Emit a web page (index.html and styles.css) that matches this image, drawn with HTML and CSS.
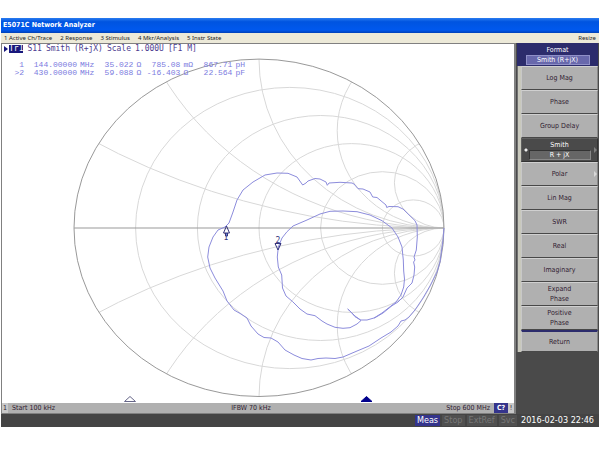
FILE: index.html
```
<!DOCTYPE html>
<html lang="en">
<head>
<meta charset="utf-8">
<meta content="width=device-width, initial-scale=1.0" name="viewport">
<title>E5071C Network Analyzer</title>
<link rel="stylesheet" href="styles.css">
</head>
<body>
<div class="app">
  <h1 class="title">E5071C Network Analyzer</h1>
  <nav class="menu">
    <button>1 Active Ch/Trace</button>
    <button>2 Response</button>
    <button>3 Stimulus</button>
    <button>4 Mkr/Analysis</button>
    <button>5 Instr State</button>
    <button class="resize">Resize</button>
  </nav>
  <main class="main">
    <section class="channel">
      <div class="plot">
        <svg class="smith" viewBox="2 44 512 359">
          <defs>
            <clipPath id="rim"><ellipse cx="259" cy="228" rx="185" ry="169"/></clipPath>
          </defs>
          <!-- constant resistance -->
          <g class="grid" clip-path="url(#rim)">
            <ellipse cx="289.8" cy="228" rx="154.2" ry="140.6"/>
            <ellipse cx="320.7" cy="228" rx="123.3" ry="112.5"/>
            <ellipse cx="351.5" cy="228" rx="92.5" ry="84.4"/>
            <ellipse cx="382.3" cy="228" rx="61.7" ry="56.3"/>
            <ellipse cx="413.2" cy="228" rx="30.8" ry="28.1"/>
            <!-- constant reactance -->
            <ellipse cx="444" cy="-401" rx="690.4" ry="629"/>
            <ellipse cx="444" cy="857" rx="690.4" ry="629"/>
            <ellipse cx="444" cy="-64" rx="320.4" ry="292"/>
            <ellipse cx="444" cy="520" rx="320.4" ry="292"/>
            <ellipse cx="444" cy="59.3" rx="185" ry="168.7"/>
            <ellipse cx="444" cy="396.7" rx="185" ry="168.7"/>
            <ellipse cx="444" cy="130.7" rx="106.8" ry="97.3"/>
            <ellipse cx="444" cy="325.3" rx="106.8" ry="97.3"/>
            <ellipse cx="444" cy="182.8" rx="49.6" ry="45.2"/>
            <ellipse cx="444" cy="273.2" rx="49.6" ry="45.2"/>
          </g>
          <g class="rim">
            <ellipse cx="259" cy="227.8" rx="185" ry="168.7"/>
            <path d="M74 228H444"/>
          </g>
          <path class="trace" d="M444 228L443 240L440 262L437 272L430 286L423 298L415 310L409 317L405 320L401 321L398 326L391 332L381 338L369 346L357 351L343 357L335 358.5L326 358L318 358.5L311 360L302 358.5L294 355L285 350L278 342L271 338L264 337.5L258 334L251 326L247 318L241 314L234 310L227 301L223 291L215 278L210 268L207.7 257L209 247L213 237L218 230L225 227L229 223L233 212L237 200L243 190L253 182L265 175L277 173L288 173.3L297 177L302.7 185L306 183L308 181L315 178.5L320 179L326 182L327.3 185.3L329 183L340 182.3L352 183L354 184L358 188.7L363 189L370 192L372.7 197L377 197.5L382 201.7L386 205L386.7 207.5L389 206.5L398 206.7L403 209L415 220.7L417 225L417.3 237L416.3 250L414 257L415 260L413.6 262L414.7 267L414 275L412 283L407 288L403 297L398 302L392 305.7L383 313L375 317.7L367 320L360.7 320L355 316.7L350 311L347.7 309"/>
          <path class="trace" d="M347.7 309L351 312L355 316L361 320.5L357 324L350 327.7L343 328.3L335 327.3L327 324L322 321L315 315.7L307 314L300 309L292.7 301.7L286 296L282.5 288L281.7 275L278.3 267L277.3 257L278.3 247L282 238L287 231.7L293 226L307 220L320 214L330 211.3L343 211L357 211.7L370 215L382 220.7L392 228L398 237L402 247L403.3 260L403.7 271L404.5 279L403.7 287L401 295L396 302L391 306L382 313L374 318"/>
          <g class="marker">
            <path d="M226.5 226L223.5 233H229.5Z M225.5 233V236H227.5V233"/>
            <path d="M278 250L275 243.5H281Z"/>
            <text x="226" y="240">1</text>
            <text x="278" y="243">2</text>
            <path class="pos" d="M130 396.5L135.5 401.5H124.5Z"/>
            <path class="pos on" d="M366.5 396.5L372 401.5H361Z"/>
          </g>
        </svg>
        <div class="readout">
          <div class="trace-head">
            <i class="arrow"></i><b>Tr1</b>
            <span>S11</span><span>Smith</span><span>(R+jX)</span><span>Scale</span><span>1.000U</span><span>[F1 M]</span>
          </div>
          <table class="values">
            <tr><th>1</th><td class="freq">144.00000</td><td class="unit">MHz</td><td class="res">35.022</td><td class="ohm">Ω</td><td class="react">785.08</td><td class="unit">mΩ</td><td class="react">867.71</td><td class="unit">pH</td></tr>
            <tr><th>&gt;2</th><td class="freq">430.00000</td><td class="unit">MHz</td><td class="res">59.088</td><td class="ohm">Ω</td><td class="react">-16.403</td><td class="unit">Ω</td><td class="react">22.564</td><td class="unit">pF</td></tr>
          </table>
        </div>
      </div>
      <div class="sweep">
        <span class="num">1</span>
        <span class="start">Start 100 kHz</span>
        <span class="ifbw">IFBW 70 kHz</span>
        <span class="stop">Stop 600 MHz</span>
        <b>C?</b><span class="num">!</span>
      </div>
    </section>
    <aside class="softkeys">
      <button class="head">Format<span>Smith (R+jX)</span></button>
      <div class="keys">
        <button>Log Mag</button>
        <button>Phase</button>
        <button>Group Delay</button>
        <button class="active more">Smith<span>R + jX</span></button>
        <button class="more">Polar</button>
        <button>Lin Mag</button>
        <button>SWR</button>
        <button>Real</button>
        <button>Imaginary</button>
        <button>Expand<br>Phase</button>
        <button>Positive<br>Phase</button>
        <button class="return">Return</button>
      </div>
    </aside>
  </main>
  <footer class="status">
    <span class="on">Meas</span>
    <span>Stop</span>
    <span>ExtRef</span>
    <span>Svc</span>
    <time datetime="2016-02-03T22:46">2016-02-03 22:46</time>
  </footer>
</div>
</body>
</html>
```
FILE: styles.css
```
*{box-sizing:border-box}
body{margin:0;background:#fff;font-family:"DejaVu Sans Condensed","DejaVu Sans",Verdana,sans-serif;font-size:7px;color:#302030}
button{margin:0;padding:0;border:0;background:none;font:inherit;color:inherit;cursor:pointer}
.app{margin:18px 1px 0}

.title{margin:0;padding:0 2px;line-height:15px;font-size:7px;font-weight:bold;color:#fff;background:linear-gradient(#2a7cf0,#0054e0 25%,#0058ee 80%,#0040b8)}
.menu{display:flex;gap:8px;height:10px;padding:0 3px;background:#ece9d8;font-family:"Noto Sans",Tahoma,sans-serif;font-size:6px;line-height:9px;color:#222}
.resize{margin-left:auto}

.main{display:grid;grid-template-columns:1fr 83px;background:#4a4a4a}
.channel{display:flex;flex-direction:column;background:#fff;border:solid #808080;border-width:1px 2px 1px 1px}
.plot{display:grid;flex:1}
.smith,.readout{grid-area:1/1}
.smith{display:block;width:100%}
.grid{fill:none;stroke:#d8d8d8;stroke-width:1}
.rim{fill:none;stroke:#999;stroke-width:1}
.trace{fill:none;stroke:#8c8cdc;stroke-width:1;stroke-linejoin:round}
.marker{fill:none;stroke:#34347c;stroke-width:1}
.marker text{font:8px "DejaVu Sans Mono",monospace;text-anchor:middle;fill:#34347c;stroke:none}
.marker .pos{stroke:#666688}
.marker .on{fill:#00008c;stroke:#00008c}

.readout{font-family:"DejaVu Sans Mono",monospace;font-size:8px;line-height:8px;color:#7c7ce0}
.trace-head{display:flex;align-items:center;gap:4px;padding:1px 2px 0;color:#4c3c90}
.trace-head b{margin-left:-3px;background:#18187c;color:#fff;font-weight:normal}
.arrow{border:solid transparent;border-width:3px 0 3px 4px;border-left-color:#18187c}
.values{margin:8px 0 0 9px;border-collapse:collapse;font-family:"Liberation Mono","Courier New",monospace}
.values th,.values td{height:8px;padding:0;line-height:8px;font-weight:normal;text-align:right;white-space:nowrap}
.values th{width:13px}
.values .freq{width:53px}
.values .res{width:39px}
.values .react{width:35px}
.values .unit{width:17px;padding-left:3px;text-align:left}
.values .ohm{width:12px;padding-left:3px;text-align:left}

.sweep{display:flex;height:10px;line-height:10px;background:#b0b0b0}
.num{width:6px;text-align:center;background:#c8c8c8}
.start{flex:1;padding-left:4px}
.ifbw{flex:0 0 auto}
.stop{flex:1;padding-right:4px;text-align:right}
.sweep b{width:14px;text-align:center;background:#34348c;color:#fff}

.softkeys{display:flex;flex-direction:column;padding:0 1px;background:#4a4a4a}
.softkeys button{display:block;position:relative;width:100%;height:24px;line-height:10px}
.softkeys span{display:block;width:64px;margin:0 auto;border:1px solid #9090c8;line-height:8px;background:#6868ac}
.softkeys .head{height:23px;background:#2c2c6c;color:#fff}
.keys{padding-left:3px;background:#c8c8bc;border-left:1px solid #707070}
.keys button{background:#b0b0b0;border:1px solid;border-color:#d0d0d0 #888 #484848 #c8c8c8}
.keys .active{background:radial-gradient(circle at 4px 11px,#eee 1px,transparent 2px) #4a4a4a;color:#fff;border-color:#606060 #333 #333 #606060}
.keys .active span{width:62px;background:#666;border-color:#333 #888 #888 #333}
.more:after{content:'';position:absolute;top:8px;right:0;border:solid transparent;border-width:3px 0 3px 3px;border-left-color:#d8d8d8}
.active:after{border-left-color:#808080}
.keys .return{height:22px;border-top:2px solid #2c2c6c}

.status{display:flex;justify-content:flex-end;gap:2px;height:13px;padding:1px 5px 1px 0;background:#444;font-size:9px;line-height:11px;color:#777}
.status span{padding:0 2px;background:#505050}
.status .on{background:#34348c;color:#fff}
.status time{padding-left:2px;color:#fff}
```
